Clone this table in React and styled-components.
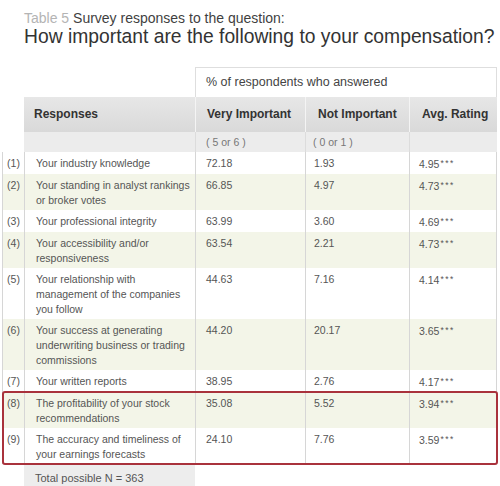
import React from "react";
import styled, { createGlobalStyle } from "styled-components";

const GlobalStyle = createGlobalStyle`
  html, body {
    margin: 0;
    padding: 0;
    background: #fff;
  }
  body {
    font-family: "Liberation Sans", Arial, sans-serif;
    color: #444;
  }
`;

const Page = styled.div`
  width: 500px;
  height: 486px;
  overflow: hidden;
  padding: 10px 3px 0 2px;
  box-sizing: border-box;
`;

const Caption = styled.div`
  margin-left: 22px;
  font-size: 14px;
  line-height: 16px;
  color: #3f3f3f;
  white-space: nowrap;

  .label {
    color: #b4b4b4;
  }
`;

const Heading = styled.h1`
  margin: 0 0 19px 22px;
  font-size: 19.3px;
  line-height: 22px;
  font-weight: normal;
  color: #333;
  white-space: nowrap;
`;

const COLS = "22px 171px 110px 104px 88px";

const Row = styled.div`
  display: grid;
  grid-template-columns: ${COLS};
`;

const SpanBox = styled.div`
  grid-column: 3 / 6;
  height: 30px;
  box-sizing: border-box;
  border: 1px solid #dedede;
  border-bottom: none;
  padding-left: 10px;
  font-size: 12.5px;
  line-height: 29px;
  color: #444;
  white-space: nowrap;
`;

const HeadCell = styled.div`
  height: 35px;
  box-sizing: border-box;
  padding-left: ${(p) => p.$pad || 11}px;
  background: linear-gradient(#e7e7e7, #d9d9d9);
  border-left: ${(p) => (p.$first ? "none" : "1px solid #f4f4f4")};
  font-size: 12px;
  font-weight: bold;
  line-height: 35px;
  color: #333;
  white-space: nowrap;
`;

const SubCell = styled.div`
  height: 20px;
  box-sizing: border-box;
  padding-left: ${(p) => p.$pad || 10}px;
  background: #ececec;
  border-left: ${(p) => (p.$first ? "none" : "1px solid #dcdcdc")};
  font-size: 10.5px;
  line-height: 20px;
  color: #777;
  white-space: nowrap;
`;

const Group = styled.div`
  position: relative;

  &::after {
    content: "";
    position: absolute;
    inset: -1px -1px -1px 0;
    border: 2px solid #a9323c;
    border-radius: 3px;
    pointer-events: none;
  }
`;

const DataRow = styled(Row)`
  background: ${(p) => (p.$shade ? "#f3f5e8" : "#fff")};
`;

const Cell = styled.div`
  padding: 4px 0 2px;
  border-left: 1px solid #d6d6d6;
  border-right: ${(p) => (p.$last ? "1px solid #d6d6d6" : "none")};
  font-size: 10.5px;
  line-height: 15px;
  color: #555;
  white-space: nowrap;
  text-align: ${(p) => (p.$center ? "center" : "left")};
  padding-left: ${(p) => (p.$center ? 0 : p.$pad || 9)}px;
`;

const Stars = styled.span`
  font-size: 8.5px;
  letter-spacing: 1.5px;
  vertical-align: 2px;
  margin-left: 1px;
`;

const TotalCell = styled.div`
  grid-column: 2 / 3;
  height: 30px;
  box-sizing: border-box;
  padding: 7px 0 0 11px;
  background: #ededed;
  font-size: 11px;
  line-height: 15px;
  color: #555;
  white-space: nowrap;
`;

const rows = [
  { n: 1, lines: ["Your industry knowledge"], vi: "72.18", ni: "1.93", avg: "4.95" },
  { n: 2, lines: ["Your standing in analyst rankings", "or broker votes"], vi: "66.85", ni: "4.97", avg: "4.73" },
  { n: 3, lines: ["Your professional integrity"], vi: "63.99", ni: "3.60", avg: "4.69" },
  { n: 4, lines: ["Your accessibility and/or", "responsiveness"], vi: "63.54", ni: "2.21", avg: "4.73" },
  { n: 5, lines: ["Your relationship with", "management of the companies", "you follow"], vi: "44.63", ni: "7.16", avg: "4.14" },
  { n: 6, lines: ["Your success at generating", "underwriting business or trading", "commissions"], vi: "44.20", ni: "20.17", avg: "3.65" },
  { n: 7, lines: ["Your written reports"], vi: "38.95", ni: "2.76", avg: "4.17" },
  { n: 8, lines: ["The profitability of your stock", "recommendations"], vi: "35.08", ni: "5.52", avg: "3.94" },
  { n: 9, lines: ["The accuracy and timeliness of", "your earnings forecasts"], vi: "24.10", ni: "7.76", avg: "3.59" },
];

const Line = ({ items }) =>
  items.map((t, i) => (
    <React.Fragment key={i}>
      {i > 0 && <br />}
      {t}
    </React.Fragment>
  ));

const Data = ({ row, index }) => (
  <DataRow $shade={index % 2 === 1}>
    <Cell $center>({row.n})</Cell>
    <Cell $pad={11}>
      <Line items={row.lines} />
    </Cell>
    <Cell $pad={10}>{row.vi}</Cell>
    <Cell $pad={8}>{row.ni}</Cell>
    <Cell $pad={9} $last>
      {row.avg}
      <Stars>***</Stars>
    </Cell>
  </DataRow>
);

export default function App() {
  return (
    <Page>
      <GlobalStyle />
      <Caption>
        <span className="label">Table 5</span> Survey responses to the question:
      </Caption>
      <Heading>How important are the following to your compensation?</Heading>

      <Row>
        <SpanBox>% of respondents who answered</SpanBox>
      </Row>
      <Row>
        <div />
        <HeadCell $first $pad={10}>Responses</HeadCell>
        <HeadCell>Very Important</HeadCell>
        <HeadCell $pad={12}>Not Important</HeadCell>
        <HeadCell $pad={12}>Avg. Rating</HeadCell>
      </Row>
      <Row>
        <div />
        <SubCell $first />
        <SubCell>( 5 or 6 )</SubCell>
        <SubCell $pad={7}>( 0 or 1 )</SubCell>
        <SubCell />
      </Row>

      {rows.slice(0, 7).map((row, i) => (
        <Data key={row.n} row={row} index={i} />
      ))}
      <Group>
        {rows.slice(7).map((row, i) => (
          <Data key={row.n} row={row} index={i + 7} />
        ))}
      </Group>

      <Row>
        <div />
        <TotalCell>Total possible N = 363</TotalCell>
      </Row>
    </Page>
  );
}
